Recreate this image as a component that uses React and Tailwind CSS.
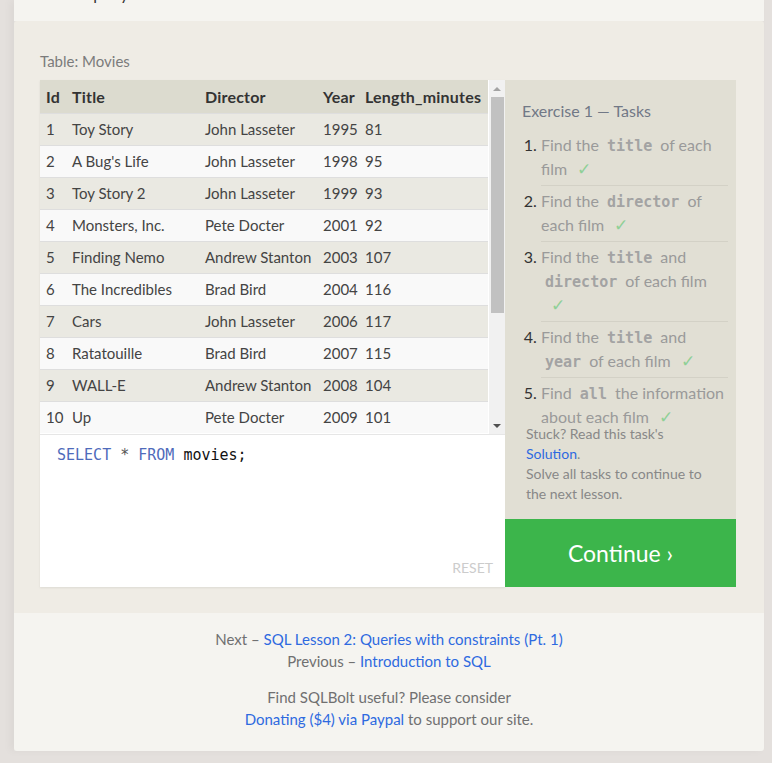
const MOVIES = [
  [1, 'Toy Story', 'John Lasseter', 1995, 81],
  [2, "A Bug's Life", 'John Lasseter', 1998, 95],
  [3, 'Toy Story 2', 'John Lasseter', 1999, 93],
  [4, 'Monsters, Inc.', 'Pete Docter', 2001, 92],
  [5, 'Finding Nemo', 'Andrew Stanton', 2003, 107],
  [6, 'The Incredibles', 'Brad Bird', 2004, 116],
  [7, 'Cars', 'John Lasseter', 2006, 117],
  [8, 'Ratatouille', 'Brad Bird', 2007, 115],
  [9, 'WALL-E', 'Andrew Stanton', 2008, 104],
  [10, 'Up', 'Pete Docter', 2009, 101],
]

function Code({ children }) {
  return (
    <code className="px-[4px] font-['DejaVu_Sans_Mono',monospace] text-[15px] leading-[1] font-bold text-[#a3a3a3]">
      {children}
    </code>
  )
}

function Check() {
  return <span className="ml-[10px] text-[17px] text-[#8fd097]">✓</span>
}

function Task({ children, last }) {
  return (
    <li className={`pt-[3px] pb-[4px] leading-[24px] ${last ? '' : 'border-b border-[#d3d1c6]'}`}>
      {children}
    </li>
  )
}

function Scrollbar() {
  return (
    <div className="w-[16px] bg-[#f1f1f1] flex flex-col items-center">
      <div className="h-[17px] flex items-center justify-center">
        <div className="w-0 h-0 border-x-[4px] border-x-transparent border-b-[4px] border-b-[#a3a3a3]" />
      </div>
      <div className="w-[13px] h-[216px] bg-[#c1c1c1]" />
      <div className="flex-1" />
      <div className="h-[17px] flex items-center justify-center">
        <div className="w-0 h-0 border-x-[4px] border-x-transparent border-t-[4px] border-t-[#505050]" />
      </div>
    </div>
  )
}

export default function App() {
  return (
    <div className="min-h-screen bg-[#e4e0dd] pb-[11px] font-['Lato',sans-serif]">
      <div className="ml-[14px] w-[750px] shadow-[-4px_0_8px_rgba(0,0,0,0.04)]">
        {/* tail of the previous paragraph */}
        <div className="h-[21px] bg-[#f5f4f0] overflow-hidden">
          <p className="-mt-[16px] pl-[74px] text-[16px] leading-[20px] text-[#333]">query</p>
        </div>

        {/* exercise */}
        <div className="bg-[#efece5] rounded-t-[3px] pl-[26px] pr-[28px] pt-[30px] pb-[26px]">
          <p className="text-[15px] leading-[20px] text-[#7b7b7b] mb-[9px]">Table: Movies</p>

          <div className="flex">
            {/* left: table + editor */}
            <div className="w-[465px] bg-white shadow-[0_1px_2px_rgba(0,0,0,0.08)] flex flex-col">
              <div className="flex h-[355px] border-b border-[#e6e6e6]">
                <table className="w-[448px] border-collapse text-[15px] text-[#444] self-start">
                  <thead>
                    <tr className="bg-[#dcdbcf] h-[33px] text-left text-[16px] tracking-[0.2px] text-[#333]">
                      <th className="w-[26px] pl-[6px] pt-[1px] font-bold">Id</th>
                      <th className="w-[133px] pl-[6px] pt-[1px] font-bold">Title</th>
                      <th className="w-[118px] pl-[6px] pt-[1px] font-bold">Director</th>
                      <th className="w-[42px] pl-[6px] pt-[1px] font-bold">Year</th>
                      <th className="pl-[6px] pt-[1px] font-bold">Length_minutes</th>
                    </tr>
                  </thead>
                  <tbody>
                    {MOVIES.map((m, i) => (
                      <tr
                        key={m[0]}
                        className={`h-[32px] border-t border-[#dedede] ${i % 2 === 0 ? 'bg-[#eae9e2]' : 'bg-[#f9f9f9]'}`}
                      >
                        {m.map((v, j) => (
                          <td key={j} className="pl-[6px] whitespace-nowrap">{v}</td>
                        ))}
                      </tr>
                    ))}
                  </tbody>
                </table>
                <div className="flex-1" />
                <Scrollbar />
              </div>

              <div className="relative h-[152px] pl-[17px] pt-[10px]">
                <p className="font-['DejaVu_Sans_Mono',monospace] text-[15px] leading-[20px] text-[#111]">
                  <span className="text-[#4f6bbb]">SELECT</span>{' '}
                  <span className="text-[#555]">*</span>{' '}
                  <span className="text-[#4f6bbb]">FROM</span> movies;
                </p>
                <span className="absolute right-[12px] bottom-[9px] text-[14px] text-[#cccccc]">RESET</span>
              </div>
            </div>

            {/* right: tasks + continue */}
            <div className="w-[231px] flex flex-col">
              <div className="flex-1 bg-[#e1dfd4] pl-[17px] pr-[8px] pt-[20px]">
                <h3 className="text-[16px] leading-[22px] text-[#717886] mb-[8px]">Exercise 1 — Tasks</h3>
                <ol className="list-decimal pl-[19px] text-[16px] text-[#9a9a9a] marker:text-[#333]">
                  <Task>
                    Find the <Code>title</Code> of each film<Check />
                  </Task>
                  <Task>
                    Find the <Code>director</Code> of each film<Check />
                  </Task>
                  <Task>
                    Find the <Code>title</Code> and <Code>director</Code> of each film <Check />
                  </Task>
                  <Task>
                    Find the <Code>title</Code> and <Code>year</Code> of each film<Check />
                  </Task>
                  <Task last>
                    Find <Code>all</Code> the information about each film<Check />
                  </Task>
                </ol>
                <div className="-mt-[9px] ml-[4px] w-[186px] text-[14px] leading-[20px] text-[#888]">
                  <p>
                    Stuck? Read this task's <span className="text-[#2e6ae0]">Solution</span>.
                  </p>
                  <p>Solve all tasks to continue to the next lesson.</p>
                </div>
              </div>
              <div className="h-[68px] bg-[#3cb54b] flex items-center justify-center text-white text-[23px]">
                Continue ›
              </div>
            </div>
          </div>
        </div>

        {/* footer */}
        <div className="bg-[#f5f4f0] rounded-b-[3px] pt-[15px] pb-[21px] text-center text-[15px] leading-[22px] text-[#707070]">
          <p>
            Next – <span className="text-[#2e6ae0]">SQL Lesson 2: Queries with constraints (Pt. 1)</span>
          </p>
          <p>
            Previous – <span className="text-[#2e6ae0]">Introduction to SQL</span>
          </p>
          <p className="mt-[14px]">Find SQLBolt useful? Please consider</p>
          <p>
            <span className="text-[#2e6ae0]">Donating ($4) via Paypal</span> to support our site.
          </p>
        </div>
      </div>
    </div>
  )
}
